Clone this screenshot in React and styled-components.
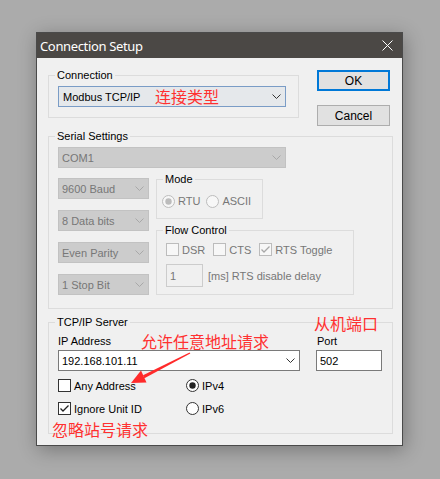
import React from 'react';
import styled, { createGlobalStyle } from 'styled-components';

const Global = createGlobalStyle`
  html, body { margin: 0; padding: 0; background: #ababab; }
  body { font-family: "Liberation Sans", Arial, sans-serif; }
`;

const Page = styled.div`
  position: relative;
  width: 440px;
  height: 479px;
  box-sizing: border-box;
  padding: 32px 0 0 36px;
  overflow: hidden;
`;

const Dialog = styled.div`
  width: 367px;
  box-sizing: border-box;
  border: 1px solid #4a4a4a;
  background: #f0f0f0;
  box-shadow: 2px 4px 18px rgba(0, 0, 0, 0.3);
  font-family: "Liberation Sans", Arial, sans-serif;
  font-size: 11px;
  color: #000;
`;

const TitleBar = styled.div`
  height: 25px;
  background: #4b4845;
  color: #fff;
  display: flex;
  align-items: center;
  justify-content: space-between;
  padding: 0 9px 0 3px;
  font-family: "Noto Sans", "Open Sans", sans-serif;
  font-size: 13px;
  letter-spacing: -0.35px;
`;

const Body = styled.div`
  padding: 11px 9px 11px 11px;
  display: flex;
  flex-direction: column;
`;

const TopRow = styled.div`
  display: flex;
  align-items: flex-start;
  gap: 18px;
`;

const ButtonCol = styled.div`
  display: flex;
  flex-direction: column;
  gap: 14px;
  padding-top: 1px;
`;

const Button = styled.button`
  width: 73px;
  height: 21px;
  box-sizing: border-box;
  padding: 0;
  font-family: "Liberation Sans", Arial, sans-serif;
  font-size: 12px;
  color: #000;
  background: #e1e1e1;
  border: ${p => (p.$default ? '2px solid #0078d7' : '1px solid #adadad')};
`;

const Group = styled.fieldset`
  margin: ${p => p.$mt || 0}px 0 0 0;
  width: ${p => p.$w}px;
  box-sizing: border-box;
  min-width: 0;
  border: 1px solid #dcdcdc;
  padding: ${p => p.$pad};
`;

const Legend = styled.legend`
  padding: 0 2px;
  margin-left: ${p => (p.$ml === undefined ? -3 : p.$ml)}px;
  font-size: 11px;
  line-height: 13px;
  color: #000;
`;

const comboBorder = { focus: '#7a9cc6', disabled: '#c2c2c2', normal: '#7a7a7a' };
const comboBg = { focus: '#e5e8eb', disabled: '#cccccc', normal: '#ffffff' };

const Combo = styled.div`
  display: flex;
  align-items: center;
  justify-content: space-between;
  box-sizing: border-box;
  width: ${p => p.$w}px;
  height: 21px;
  padding: 0 4px 0 ${p => (p.$variant === 'focus' ? 4 : 3)}px;
  border: 1px solid ${p => comboBorder[p.$variant || 'normal']};
  background: ${p => comboBg[p.$variant || 'normal']};
  color: ${p => (p.$variant === 'disabled' ? '#777777' : '#000')};
  white-space: nowrap;
`;

const TextBox = styled.div`
  display: flex;
  align-items: center;
  box-sizing: border-box;
  width: ${p => p.$w}px;
  height: ${p => p.$h || 21}px;
  padding-left: 3px;
  border: 1px solid ${p => (p.$disabled ? '#cccccc' : '#7a7a7a')};
  background: ${p => (p.$disabled ? '#f0f0f0' : '#fff')};
  color: ${p => (p.$disabled ? '#777777' : '#000')};
`;

const SerialCols = styled.div`
  display: flex;
  gap: 7px;
  margin-top: 5px;
`;

const ComboStack = styled.div`
  display: flex;
  flex-direction: column;
  gap: 11px;
  padding-top: 5px;
`;

const RightCol = styled.div`
  display: flex;
  flex-direction: column;
  gap: 5px;
`;

const OptRow = styled.div`
  display: flex;
  align-items: center;
  gap: ${p => p.$gap}px;
  height: ${p => p.$h || 14}px;
`;

const Option = styled.span`
  display: inline-flex;
  align-items: center;
  gap: 3px;
  line-height: 14px;
  white-space: nowrap;
  color: ${p => (p.$disabled ? '#777777' : '#000')};
`;

const DelayRow = styled.div`
  display: flex;
  align-items: center;
  gap: 5px;
  margin-top: 8px;
  color: #777777;
`;

const TcpGrid = styled.div`
  display: grid;
  grid-template-columns: 242px 66px;
  column-gap: 16px;
  row-gap: 2px;
`;

const FieldLabel = styled.div`
  line-height: 14px;
  padding-left: ${p => p.$pl || 0}px;
`;

const OptionsGrid = styled.div`
  display: grid;
  grid-template-columns: 128px auto;
  grid-auto-rows: 15px;
  row-gap: 8px;
  margin-top: 7px;
  align-items: center;
`;

const Note = styled.span`
  position: absolute;
  left: ${p => p.$x}px;
  top: ${p => p.$y}px;
  font-family: "Noto Sans CJK SC", sans-serif;
  font-size: 16px;
  line-height: 16px;
  color: #ff3030;
  white-space: nowrap;
  pointer-events: none;
`;

const Overlay = styled.svg`
  position: absolute;
  left: 0;
  top: 0;
  pointer-events: none;
`;

const Chevron = ({ color = '#333' }) => (
  <svg width="9" height="5" viewBox="0 0 9 5" style={{ flex: 'none' }}>
    <polyline points="0.5,0.5 4.5,4.5 8.5,0.5" fill="none" stroke={color} strokeWidth="1" />
  </svg>
);

const CheckBox = ({ checked, disabled }) => {
  const c = disabled ? '#bcbcbc' : '#333333';
  return (
    <svg width="13" height="13" viewBox="0 0 13 13" style={{ flex: 'none' }}>
      <rect x="0.5" y="0.5" width="12" height="12" fill={disabled ? '#f7f7f7' : '#fff'} stroke={c} />
      {checked && (
        <polyline points="2.5,6.5 5,9 10.5,3.5" fill="none" stroke={disabled ? '#a8a8a8' : '#222'} strokeWidth="1.3" />
      )}
    </svg>
  );
};

const Radio = ({ on, disabled }) => {
  const c = disabled ? '#bcbcbc' : '#333333';
  return (
    <svg width="13" height="13" viewBox="0 0 13 13" style={{ flex: 'none' }}>
      <circle cx="6.5" cy="6.5" r="6" fill={disabled ? '#f7f7f7' : '#fff'} stroke={c} />
      {on && <circle cx="6.5" cy="6.5" r="3.2" fill={disabled ? '#bcbcbc' : '#222'} />}
    </svg>
  );
};

const CloseIcon = () => (
  <svg width="11" height="11" viewBox="0 0 11 11">
    <path d="M0.5 0.5 L10.5 10.5 M10.5 0.5 L0.5 10.5" stroke="#fff" strokeWidth="1" />
  </svg>
);

export default function App() {
  return (
    <>
      <Global />
      <Page>
        <Dialog>
          <TitleBar>
            <span>Connection Setup</span>
            <CloseIcon />
          </TitleBar>
          <Body>
            <TopRow>
              <Group $w={251} $pad="4px 12px 10px 9px">
                <Legend>Connection</Legend>
                <Combo $w={228} $variant="focus">
                  <span>Modbus TCP/IP</span>
                  <Chevron />
                </Combo>
              </Group>
              <ButtonCol>
                <Button $default>OK</Button>
                <Button>Cancel</Button>
              </ButtonCol>
            </TopRow>

            <Group $w={345} $mt={4} $pad="4px 0 13px 9px">
              <Legend>Serial Settings</Legend>
              <Combo $w={228} $variant="disabled">
                <span>COM1</span>
                <Chevron color="#a8a8a8" />
              </Combo>
              <SerialCols>
                <ComboStack>
                  {['9600 Baud', '8 Data bits', 'Even Parity', '1 Stop Bit'].map(t => (
                    <Combo key={t} $w={91} $variant="disabled">
                      <span>{t}</span>
                      <Chevron color="#a8a8a8" />
                    </Combo>
                  ))}
                </ComboStack>
                <RightCol>
                  <Group $w={107} $pad="8px 0 10px 5px">
                    <Legend $ml={1}>Mode</Legend>
                    <OptRow $gap={6}>
                      <Option $disabled>
                        <Radio on disabled />
                        RTU
                      </Option>
                      <Option $disabled>
                        <Radio disabled />
                        ASCII
                      </Option>
                    </OptRow>
                  </Group>
                  <Group $w={198} $pad="6px 0 7px 9px">
                    <Legend>Flow Control</Legend>
                    <OptRow $gap={8} $h={13}>
                      <Option $disabled>
                        <CheckBox disabled />
                        DSR
                      </Option>
                      <Option $disabled>
                        <CheckBox disabled />
                        CTS
                      </Option>
                      <Option $disabled>
                        <CheckBox checked disabled />
                        RTS Toggle
                      </Option>
                    </OptRow>
                    <DelayRow>
                      <TextBox $w={37} $h={23} $disabled>1</TextBox>
                      <span>[ms] RTS disable delay</span>
                    </DelayRow>
                  </Group>
                </RightCol>
              </SerialCols>
            </Group>

            <Group $w={345} $mt={7} $pad="5px 0 17px 9px">
              <Legend>TCP/IP Server</Legend>
              <TcpGrid>
                <FieldLabel>IP Address</FieldLabel>
                <FieldLabel $pl={1}>Port</FieldLabel>
                <Combo $w={242}>
                  <span>192.168.101.11</span>
                  <Chevron />
                </Combo>
                <TextBox $w={66}>502</TextBox>
              </TcpGrid>
              <OptionsGrid>
                <Option>
                  <CheckBox />
                  Any Address
                </Option>
                <Option>
                  <Radio on />
                  IPv4
                </Option>
                <Option>
                  <CheckBox checked />
                  Ignore Unit ID
                </Option>
                <Option>
                  <Radio />
                  IPv6
                </Option>
              </OptionsGrid>
            </Group>
          </Body>
        </Dialog>

        <Note $x={155} $y={88}>连接类型</Note>
        <Note $x={141} $y={333}>允许任意地址请求</Note>
        <Note $x={314} $y={315}>从机端口</Note>
        <Note $x={52} $y={421}>忽略站号请求</Note>
        <Overlay width="440" height="479" viewBox="0 0 440 479">
          <polygon points="190.3,353.6 189.6,352.4 143,375.2 144.4,378.3" fill="#ff2a2a" />
          <polygon points="131,383 141,370.5 146.5,382.5" fill="#ff2a2a" />
        </Overlay>
      </Page>
    </>
  );
}
